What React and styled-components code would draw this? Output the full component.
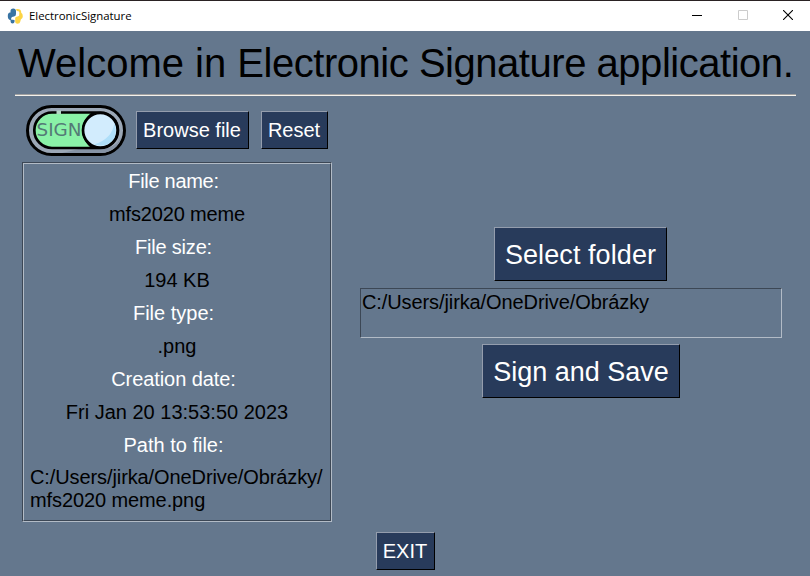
import React from "react";
import styled, { createGlobalStyle } from "styled-components";

const Global = createGlobalStyle`
  * { box-sizing: border-box; }
  body { margin: 0; background: #64778d; overflow: hidden; }
`;

const Window = styled.div`
  width: 810px;
  height: 576px;
  display: flex;
  flex-direction: column;
  background: #64778d;
  color: #000;
  font-family: "Liberation Sans", Arial, sans-serif;
  font-size: 20px;
  line-height: 23px;
  white-space: nowrap;
`;

const TitleBar = styled.header`
  height: 31px;
  flex: none;
  display: flex;
  align-items: center;
  padding-left: 7px;
  background: #fff;
  border-top: 1px solid #2a2223;
`;

const Caption = styled.span`
  flex: 1;
  margin-left: 6px;
  font: 11.4px/16px "Open Sans", "Noto Sans", sans-serif;
`;

const Controls = styled.div`
  display: flex;
  height: 28px;
  margin: 0 -1px 2px 0;
`;

const Control = styled.span`
  width: 45.5px;
  display: grid;
  place-items: center;
  color: ${(p) => (p.$disabled ? "#ccc" : "#000")};
`;

const Heading = styled.h1`
  flex: none;
  height: 63px;
  margin: 0;
  padding: 9px 0 0 18px;
  font-size: 40px;
  font-weight: 400;
  line-height: 46px;
`;

const Tight = styled.span`
  letter-spacing: -0.47px;
`;

const Divider = styled.div`
  flex: none;
  height: 2px;
  margin: 0 14px 0 15px;
  border-top: 1px solid #a0a0a0;
  background: #f4f1ec;
`;

const Content = styled.main`
  display: flex;
  height: 426px;
  padding-left: 22px;
`;

const FileColumn = styled.section`
  width: 310px;
  padding-top: 9px;
`;

const Toolbar = styled.div`
  display: flex;
  height: 57px;
  padding-left: 4px;
`;

const ToggleDrawing = styled.svg`
  display: block;
  width: 100px;
  height: 51px;
`;

const Button = styled.button`
  display: grid;
  place-items: center;
  width: ${(p) => p.$w}px;
  height: ${(p) => (p.$large ? 54 : 38)}px;
  margin: ${(p) => p.$gap || "0"};
  padding: ${(p) => (p.$large ? "2px 0 0" : "0 1px 0 0")};
  border: 1px solid;
  border-color: #949dad #000 #000 #949dad;
  border-radius: 0;
  background: #283b5b;
  color: #fff;
  font-family: inherit;
  font-size: ${(p) => (p.$large ? 27 : 20)}px;
  line-height: ${(p) => (p.$large ? 31 : 23)}px;
  letter-spacing: ${(p) => p.$track || 0}px;
`;

const Frame = styled.div`
  height: 360px;
  border: 1px solid;
  border-color: #3c4755 #b2bbc6 #b2bbc6 #3c4755;
`;

const FrameInner = styled.dl`
  height: 358px;
  margin: 0;
  padding: 6px 6px 0 6px;
  border: 1px solid;
  border-color: #b2bbc6 #3c4755 #3c4755 #b2bbc6;
`;

const Label = styled.dt`
  height: 23px;
  margin: 0 0 10px;
  padding-right: 7px;
  color: #fff;
  text-align: center;
  letter-spacing: ${(p) => p.$track || 0}px;
`;

const Value = styled.dd`
  height: 23px;
  margin: 0 0 10px;
  text-align: center;
  letter-spacing: ${(p) => p.$track || 0}px;
`;

const PathValue = styled.dd`
  margin: -1px 0 0;
  letter-spacing: -0.1px;
`;

const ActionColumn = styled.section`
  display: flex;
  flex-direction: column;
  align-items: center;
  width: 422px;
  margin-left: 28px;
  padding-top: 131px;
`;

const FolderPath = styled.div`
  width: 422px;
  height: 50px;
  margin: 7px 0 6px;
  padding: 2px 1px;
  border: 1px solid;
  border-color: #3c4755 #b2bbc6 #b2bbc6 #3c4755;
  letter-spacing: -0.1px;
`;

const Footer = styled.footer`
  padding: 10px 0 0 376px;
`;

const Snakes = () => (
  <svg width="16" height="16" viewBox="0 0 16 16" aria-hidden="true">
    <path d="M3.500 4.500V3Q3.500.5 6.200.5T9 3v3Q9 8 7 8.500L5 9Q4 9.500 4 12H3Q.8 11.500.8 8T3 4.500Z" fill="#3873a3" />
    <path d="M3.500 11.500 7.500 12V13.500Q7.500 15.500 5.500 15.500T3.500 13Z" fill="#3873a3" />
    <path d="M9 1Q14.200.5 14.200 4v.8Q15.800 5.500 15.800 8.300t-2 3.200l-.5 2Q13 15.700 10.500 15.700T8.200 13V10Q8.300 8.800 10.500 8.500T12.300 6V4Q12 3 9.800 3Z" fill="#fcd446" />
  </svg>
);

const SignToggle = () => (
  <ToggleDrawing viewBox="0 0 100 51" role="img" aria-label="SIGN">
    <rect x="1.500" y="1.500" width="97" height="48" rx="24" fill="#9ba7b6" stroke="#000" strokeWidth="3" />
    <path d="M53 44H77Q92 42 96 30Q92 47 75 48H36Z" fill="#8593a5" />
    <rect x="8.300" y="7.500" width="83.700" height="35.500" rx="17.700" fill="#8af2a7" stroke="#000" strokeWidth="2.700" />
    <path d="M65 8Q59 13 56.500 21V30Q59 38 65 43H74V8Z" fill="#000" />
    <path d="M30.500 5.500h4.500v3.600h-4.500z" fill="#b3d4c4" />
    <text x="10.500" y="31.300" fontFamily="DejaVu Sans, sans-serif" fontSize="17" textLength="45" lengthAdjust="spacingAndGlyphs" fill="#547a76">SIGN</text>
    <circle cx="74.300" cy="25.300" r="17.300" fill="#d2ecfd" stroke="#000" strokeWidth="2.700" />
    <path d="M88.500 18Q86 34 68 39.500Q82 43.500 88.500 33Q91 26 88.500 18Z" fill="#afdff9" />
  </ToggleDrawing>
);

const details = [
  { label: "File name:", value: "mfs2020 meme", labelTrack: -0.3, valueTrack: -0.15 },
  { label: "File size:", value: "194 KB", labelTrack: -0.2 },
  { label: "File type:", value: ".png" },
  { label: "Creation date:", value: "Fri Jan 20 13:53:50 2023", labelTrack: -0.08 },
];

export default function App() {
  return (
    <Window>
      <Global />
      <TitleBar>
        <Snakes />
        <Caption>ElectronicSignature</Caption>
        <Controls>
          <Control>
            <svg width="10" height="10"><path d="M0 5.500h10" stroke="currentColor" /></svg>
          </Control>
          <Control $disabled>
            <svg width="10" height="10"><path d="M.5.5h9v9h-9z" fill="none" stroke="currentColor" /></svg>
          </Control>
          <Control>
            <svg width="10" height="10"><path d="M0 0l10 10M10 0L0 10" stroke="currentColor" strokeWidth="1.100" /></svg>
          </Control>
        </Controls>
      </TitleBar>
      <Heading>Welcome in <Tight>Electronic Signature application.</Tight></Heading>
      <Divider />
      <Content>
        <FileColumn>
          <Toolbar>
            <SignToggle />
            <Button $w={113} $gap="6px 12px 0 10px">Browse file</Button>
            <Button $w={67} $gap="6px 0 0">Reset</Button>
          </Toolbar>
          <Frame>
            <FrameInner>
              {details.map((d) => (
                <React.Fragment key={d.label}>
                  <Label $track={d.labelTrack}>{d.label}</Label>
                  <Value $track={d.valueTrack}>{d.value}</Value>
                </React.Fragment>
              ))}
              <Label>Path to file:</Label>
              <PathValue>C:/Users/jirka/OneDrive/Obrázky/<br />mfs2020 meme.png</PathValue>
            </FrameInner>
          </Frame>
        </FileColumn>
        <ActionColumn>
          <Button $large $w={173} $gap="0 0 0 19px" $track={0.08}>Select folder</Button>
          <FolderPath>C:/Users/jirka/OneDrive/Obrázky</FolderPath>
          <Button $large $w={198} $gap="0 0 0 20px">Sign and Save</Button>
        </ActionColumn>
      </Content>
      <Footer>
        <Button $w={59}>EXIT</Button>
      </Footer>
    </Window>
  );
}
